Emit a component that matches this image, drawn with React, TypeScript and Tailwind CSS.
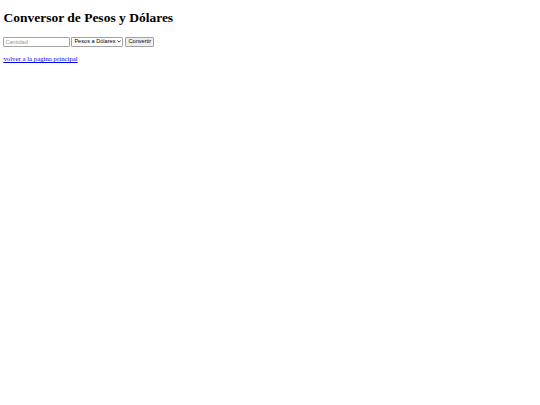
export default function App() {
  return (
    <div className="min-h-screen bg-white px-[3.4px] pt-[10px] font-['Liberation_Serif',serif] text-black">
      <h1 className="text-[13.5px] font-bold leading-[15.5px]">Conversor de Pesos y Dólares</h1>

      <form className="mt-[11.5px] flex items-center font-['Liberation_Sans',Arial,sans-serif] text-[5.6px] leading-none">
        <input
          type="text"
          placeholder="Cantidad"
          className="h-[9.5px] w-[67px] rounded-[1px] border-[0.6px] border-[#a3a3a3] px-[1px] outline-none placeholder:text-[#9a9a9a]"
        />
        <div className="relative ml-[1px]">
          <select className="h-[9.5px] w-[52px] appearance-none rounded-[1px] border-[0.6px] border-[#a3a3a3] bg-white pl-[2px] pr-[5px] text-black">
            <option>Pesos a Dólares</option>
            <option>Dólares a Pesos</option>
          </select>
          {/* chevron */}
          <svg
            viewBox="0 0 10 6"
            className="pointer-events-none absolute right-[2px] top-[3.4px] h-[2.6px] w-[4.2px]"
          >
            <path d="M1 1 L5 5 L9 1" fill="none" stroke="#000" strokeWidth="1.8" />
          </svg>
        </div>
        <button
          type="button"
          className="ml-[2px] h-[9.5px] w-[29px] rounded-[1px] border-[0.6px] border-[#a3a3a3] bg-[#efefef] px-[1px] text-black"
        >
          Convertir
        </button>
      </form>

      <p className="mt-[8.8px] text-[6.8px] leading-[7.8px]">
        <a href="#" className="text-[#0000ee] underline">
          volver a la pagina principal
        </a>
      </p>
    </div>
  );
}
